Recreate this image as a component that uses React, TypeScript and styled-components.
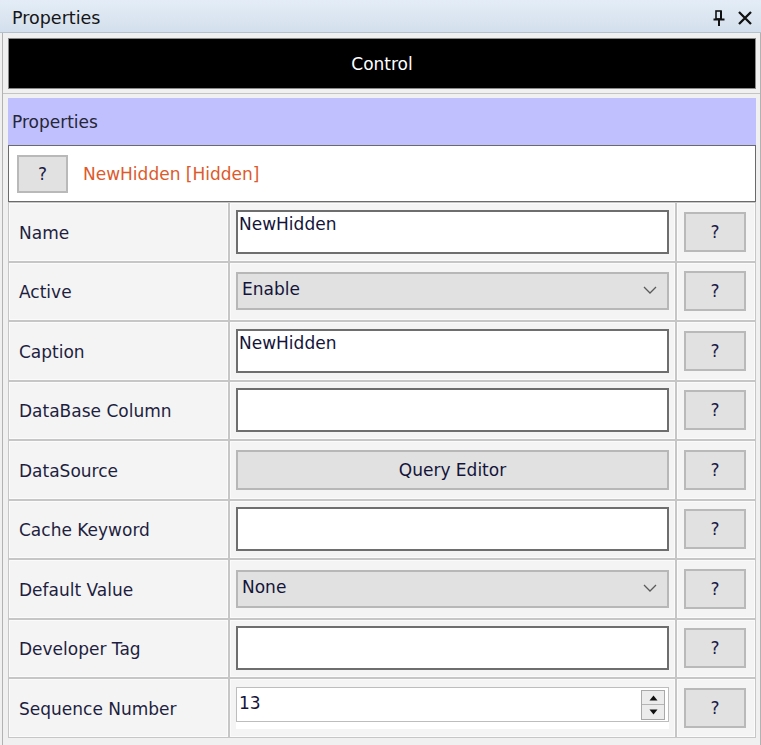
import React from "react";
import styled, { createGlobalStyle } from "styled-components";

const GlobalStyle = createGlobalStyle`
  html, body {
    margin: 0;
    padding: 0;
    background: #f0f0f0;
  }
  body {
    font-family: "DejaVu Sans", "Liberation Sans", sans-serif;
    width: 761px;
    height: 745px;
    overflow: hidden;
  }
`;

const Window = styled.div`
  display: flex;
  flex-direction: column;
  height: 745px;
`;

const TitleBar = styled.div`
  height: 32px;
  display: flex;
  align-items: center;
  justify-content: space-between;
  padding: 4px 8px 0 12px;
  box-sizing: border-box;
  height: 33px;
  background: linear-gradient(#e4edf7, #d3dfec);
  border-bottom: 1px solid #b4c0ce;
`;

const TitleText = styled.span`
  font-size: 17.5px;
  color: #151515;
`;

const TitleIcons = styled.div`
  display: flex;
  align-items: center;
  gap: 12px;
`;

const Panel = styled.div`
  flex: 1;
  margin-left: 2px;
  border-left: 1px solid #b2b2b2;
  border-right: 1px solid #b2b2b2;
  display: flex;
  flex-direction: column;
`;

const ControlSection = styled.div`
  padding: 5px 4px 4px 5px;
  border-bottom: 1px solid #c4c4c4;
`;

const ControlBar = styled.div`
  height: 49px;
  background: #000;
  border: 1px solid #8a8a8a;
  display: flex;
  align-items: center;
  justify-content: center;
  color: #fff;
  font-size: 17px;
`;

const PropsSection = styled.div`
  padding: 4px 4px 0 5px;
  display: flex;
  flex-direction: column;
`;

const PropsHeader = styled.div`
  height: 47px;
  background: #c0c0ff;
  display: flex;
  align-items: center;
  padding-left: 4px;
  font-size: 17px;
  color: #262636;
`;

const TargetRow = styled.div`
  height: 55px;
  background: #fff;
  border: 1px solid #6a6a6a;
  display: flex;
  align-items: center;
  gap: 15px;
  padding-left: 8px;
`;

const TargetName = styled.span`
  font-size: 17px;
  color: #dd5a2c;
`;

const HelpButton = styled.button<{ $w: number; $h: number }>`
  width: ${(p) => p.$w}px;
  height: ${(p) => p.$h}px;
  background: #e1e1e1;
  border: 2px solid #b9b9b9;
  font-family: inherit;
  font-size: 17px;
  color: #1b1b48;
  padding: 0;
  display: flex;
  align-items: center;
  justify-content: center;
`;

const Row = styled.div`
  height: 59.5px;
  display: grid;
  grid-template-columns: 221px 447px 1fr;
  background: #f4f4f4;
`;

const Cell = styled.div`
  border: 1px solid #c6c6c6;
  box-shadow: inset 0 0 0 1px #fbfbfb;
  display: flex;
  align-items: center;
`;

const LabelCell = styled(Cell)`
  padding-left: 10px;
  padding-top: 2px;
  font-size: 17px;
  color: #1e1e40;
`;

const ValueCell = styled(Cell)`
  padding: 0 6px;
`;

const ButtonCell = styled(Cell)`
  padding-left: 7px;
`;

const TextBox = styled.div<{ $h?: number }>`
  width: 100%;
  height: ${(p) => p.$h ?? 44}px;
  box-sizing: border-box;
  background: #fff;
  border: 2px solid #6e6e6e;
  padding: 3px 1px;
  font-size: 17px;
  color: #14143a;
  line-height: 19px;
`;

const SelectBox = styled.div`
  width: 100%;
  height: 38px;
  box-sizing: border-box;
  background: #e1e1e1;
  border: 2px solid #b7b7b7;
  display: flex;
  justify-content: space-between;
  align-items: flex-start;
  padding: 5px 10px 0 4px;
  font-size: 17px;
  color: #14143a;
`;

const Chevron = styled.svg`
  margin-top: 7px;
`;

const QueryButton = styled.div`
  width: 100%;
  height: 40px;
  box-sizing: border-box;
  background: #e1e1e1;
  border: 2px solid #b7b7b7;
  display: flex;
  align-items: center;
  justify-content: center;
  font-size: 17px;
  color: #14143a;
`;

const NumberWrap = styled.div`
  width: 100%;
  height: 43px;
  padding-top: 1px;
  box-sizing: border-box;
  background: linear-gradient(#f4f4f4 0 1px, #fff 1px);
`;

const NumberBox = styled.div`
  height: 35px;
  box-sizing: border-box;
  background: #fff;
  border: 1px solid #bdbdbd;
  display: flex;
  justify-content: space-between;
  align-items: center;
  padding: 0 3px 0 2px;
  font-size: 17px;
  color: #14143a;
`;

const NumberText = styled.span`
  align-self: flex-start;
  margin-top: 5px;
`;

const Spinner = styled.div`
  width: 22px;
  height: 28px;
  border: 1px solid #a9a9a9;
  background: #ececec;
  display: flex;
  flex-direction: column;
`;

const SpinHalf = styled.div<{ $top?: boolean }>`
  flex: 1;
  display: flex;
  align-items: center;
  justify-content: center;
  border-bottom: ${(p) => (p.$top ? "1px solid #b5b5b5" : "none")};
`;

const PinIcon = () => (
  <svg width="12" height="16" viewBox="0 0 12 16">
    <rect x="3" y="1" width="5" height="8" fill="none" stroke="#111" strokeWidth="1.6" />
    <rect x="7" y="1" width="2" height="8" fill="#111" />
    <rect x="0.5" y="8.5" width="11" height="2" fill="#111" />
    <rect x="5" y="10" width="2" height="6" fill="#111" />
  </svg>
);

const CloseIcon = () => (
  <svg width="16" height="16" viewBox="0 0 16 16">
    <path d="M2 2 L14 14 M14 2 L2 14" stroke="#111" strokeWidth="2.3" />
  </svg>
);

const DownChevron = () => (
  <Chevron width="14" height="8" viewBox="0 0 14 8">
    <polyline points="1,1 7,7 13,1" fill="none" stroke="#5a5a5a" strokeWidth="1.3" />
  </Chevron>
);

type Prop = {
  label: string;
  kind: "text" | "select" | "button" | "number";
  value?: string;
};

const props: Prop[] = [
  { label: "Name", kind: "text", value: "NewHidden" },
  { label: "Active", kind: "select", value: "Enable" },
  { label: "Caption", kind: "text", value: "NewHidden" },
  { label: "DataBase Column", kind: "text" },
  { label: "DataSource", kind: "button", value: "Query Editor" },
  { label: "Cache Keyword", kind: "text" },
  { label: "Default Value", kind: "select", value: "None" },
  { label: "Developer Tag", kind: "text" },
  { label: "Sequence Number", kind: "number", value: "13" },
];

const renderValue = (p: Prop) => {
  switch (p.kind) {
    case "select":
      return (
        <SelectBox>
          <span>{p.value}</span>
          <DownChevron />
        </SelectBox>
      );
    case "button":
      return <QueryButton>{p.value}</QueryButton>;
    case "number":
      return (
        <NumberWrap>
          <NumberBox>
            <NumberText>{p.value}</NumberText>
            <Spinner>
              <SpinHalf $top>
                <svg width="9" height="6" viewBox="0 0 9 6">
                  <polygon points="0.5,5.5 4.5,0.5 8.5,5.5" fill="#111" />
                </svg>
              </SpinHalf>
              <SpinHalf>
                <svg width="9" height="6" viewBox="0 0 9 6">
                  <polygon points="0.5,0.5 8.5,0.5 4.5,5.5" fill="#111" />
                </svg>
              </SpinHalf>
            </Spinner>
          </NumberBox>
        </NumberWrap>
      );
    default:
      return <TextBox>{p.value}</TextBox>;
  }
};

const App = () => {
  return (
    <>
      <GlobalStyle />
      <Window>
        <TitleBar>
          <TitleText>Properties</TitleText>
          <TitleIcons>
            <PinIcon />
            <CloseIcon />
          </TitleIcons>
        </TitleBar>
        <Panel>
          <ControlSection>
            <ControlBar>Control</ControlBar>
          </ControlSection>
          <PropsSection>
            <PropsHeader>Properties</PropsHeader>
            <TargetRow>
              <HelpButton $w={51} $h={38}>?</HelpButton>
              <TargetName>NewHidden [Hidden]</TargetName>
            </TargetRow>
            {props.map((p) => (
              <Row key={p.label}>
                <LabelCell>{p.label}</LabelCell>
                <ValueCell>{renderValue(p)}</ValueCell>
                <ButtonCell>
                  <HelpButton $w={62} $h={40}>?</HelpButton>
                </ButtonCell>
              </Row>
            ))}
          </PropsSection>
        </Panel>
      </Window>
    </>
  );
};

export default App;
